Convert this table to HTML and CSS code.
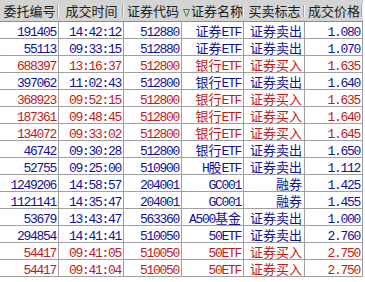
FILE: index.html
```html
<!DOCTYPE html>
<html>
<head>
    <title>成交查询</title>
    <link rel="stylesheet" href="styles.css">
</head>
<body>
    <table class="grid">
        <colgroup>
            <col class="c-id">
            <col class="c-time">
            <col class="c-code">
            <col class="c-name">
            <col class="c-side">
            <col class="c-price">
        </colgroup>
        <thead>
            <tr>
                <th>委托编号</th>
                <th>成交时间</th>
                <th class="nosep">证券代码</th>
                <th><svg class="sort" width="7" height="9" viewBox="0 0 7 9"><path d="M0.5 1.5 H6.5 L3.5 8.5 Z" fill="none" stroke="#1e9a1e" stroke-width="1"/></svg>证券名称</th>
                <th>买卖标志</th>
                <th>成交价格</th>
            </tr>
        </thead>
        <tbody>
            <tr class="sell"><td>191405</td><td>14:42:12</td><td>512880</td><td><span class="cn">证券</span>ETF</td><td><span class="cn">证券卖出</span></td><td>1.080</td></tr>
            <tr class="sell"><td>55113</td><td>09:33:15</td><td>512880</td><td><span class="cn">证券</span>ETF</td><td><span class="cn">证券卖出</span></td><td>1.070</td></tr>
            <tr class="buy"><td>688397</td><td>13:16:37</td><td>512800</td><td><span class="cn">银行</span>ETF</td><td><span class="cn">证券买入</span></td><td>1.635</td></tr>
            <tr class="sell"><td>397062</td><td>11:02:43</td><td>512800</td><td><span class="cn">银行</span>ETF</td><td><span class="cn">证券卖出</span></td><td>1.640</td></tr>
            <tr class="buy"><td>368923</td><td>09:52:15</td><td>512800</td><td><span class="cn">银行</span>ETF</td><td><span class="cn">证券买入</span></td><td>1.635</td></tr>
            <tr class="buy"><td>187361</td><td>09:48:45</td><td>512800</td><td><span class="cn">银行</span>ETF</td><td><span class="cn">证券买入</span></td><td>1.640</td></tr>
            <tr class="buy"><td>134072</td><td>09:33:02</td><td>512800</td><td><span class="cn">银行</span>ETF</td><td><span class="cn">证券买入</span></td><td>1.645</td></tr>
            <tr class="sell"><td>46742</td><td>09:30:28</td><td>512800</td><td><span class="cn">银行</span>ETF</td><td><span class="cn">证券卖出</span></td><td>1.650</td></tr>
            <tr class="sell"><td>52755</td><td>09:25:00</td><td>510900</td><td>H<span class="cn">股</span>ETF</td><td><span class="cn">证券卖出</span></td><td>1.112</td></tr>
            <tr class="sell"><td>1249206</td><td>14:58:57</td><td>204001</td><td>GC001</td><td><span class="cn">融券</span></td><td>1.425</td></tr>
            <tr class="sell"><td>1121141</td><td>14:35:47</td><td>204001</td><td>GC001</td><td><span class="cn">融券</span></td><td>1.455</td></tr>
            <tr class="sell"><td>53679</td><td>13:43:47</td><td>563360</td><td>A500<span class="cn">基金</span></td><td><span class="cn">证券卖出</span></td><td>1.000</td></tr>
            <tr class="sell"><td>294854</td><td>14:41:41</td><td>510050</td><td>50ETF</td><td><span class="cn">证券卖出</span></td><td>2.760</td></tr>
            <tr class="buy"><td>54417</td><td>09:41:05</td><td>510050</td><td>50ETF</td><td><span class="cn">证券买入</span></td><td>2.750</td></tr>
            <tr class="buy"><td>54417</td><td>09:41:04</td><td>510050</td><td>50ETF</td><td><span class="cn">证券买入</span></td><td>2.750</td></tr>
        </tbody>
    </table>
</body>
</html>
```

FILE: styles.css
```css
body {
    margin: 0;
    background: #fff;
}
.grid {
    border-collapse: separate;
    border-spacing: 0;
    table-layout: fixed;
    width: 363px;
}
.c-id { width: 59px; }
.c-time { width: 65px; }
.c-code { width: 58px; }
.c-name { width: 62px; }
.c-side { width: 61px; }
.c-price { width: 58px; }
th {
    position: relative;
    height: 22px;
    padding: 1px 0 0;
    box-sizing: border-box;
    background: #d4d4d4;
    border-bottom: 1px solid #8c8c8c;
    font: 13px "Noto Sans CJK SC", sans-serif;
    font-weight: normal;
    color: #1a1a1a;
    text-align: center;
    white-space: nowrap;
    line-height: 20px;
}
th::after {
    content: "";
    position: absolute;
    right: 0;
    top: 5px;
    bottom: 4px;
    width: 1px;
    background: #a4a4a4;
    border-right: 1px solid #f4f4f4;
}
th.nosep::after {
    display: none;
}
.sort {
    vertical-align: -1px;
    margin-right: 1px;
}
td {
    height: 17px;
    box-sizing: border-box;
    padding: 0 2px 0 0;
    border-right: 1px solid #a0a0a0;
    border-bottom: 1px solid #a0a0a0;
    font: 13px "Liberation Mono", "Noto Sans CJK SC", monospace;
    letter-spacing: -1.3px;
    line-height: 10px;
    vertical-align: bottom;
    text-align: right;
    white-space: nowrap;
}
.cn {
    font-family: "Noto Sans CJK SC", sans-serif;
    letter-spacing: 0;
    line-height: 0;
}
.sell td {
    color: #10109a;
}
.buy td {
    color: #c41818;
}
```
